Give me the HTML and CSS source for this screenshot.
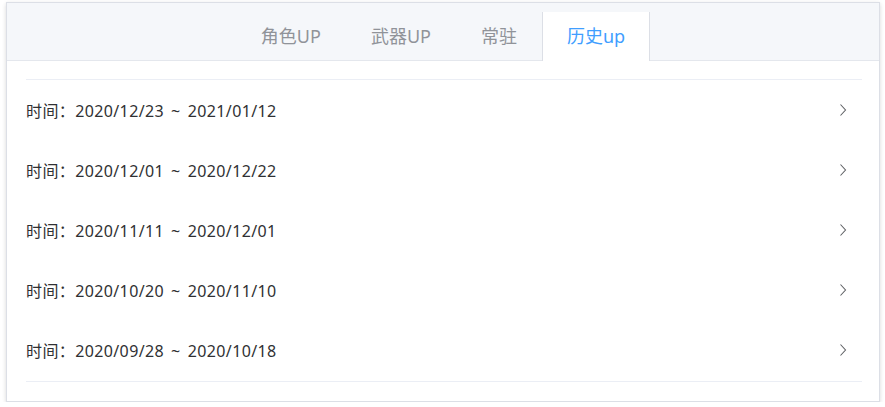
FILE: index.html
```html
<!DOCTYPE html>
<html lang="zh">
<head>
<meta charset="utf-8">
<link rel="stylesheet" href="styles.css">
</head>
<body>
<div class="card">
  <div class="tabs-header">
    <div class="tab">角色UP</div>
    <div class="tab">武器UP</div>
    <div class="tab">常驻</div>
    <div class="tab active">历史up</div>
  </div>
  <div class="content">
    <div class="list">
      <div class="row"><span class="label">时间：2020/12/23 ~ 2021/01/12</span><svg class="arrow" width="8" height="14" viewBox="0 0 8 14"><polyline points="1.5,1.5 6.5,7 1.5,12.5" fill="none" stroke="#606266" stroke-width="1.1"/></svg></div>
      <div class="row"><span class="label">时间：2020/12/01 ~ 2020/12/22</span><svg class="arrow" width="8" height="14" viewBox="0 0 8 14"><polyline points="1.5,1.5 6.5,7 1.5,12.5" fill="none" stroke="#606266" stroke-width="1.1"/></svg></div>
      <div class="row"><span class="label">时间：2020/11/11 ~ 2020/12/01</span><svg class="arrow" width="8" height="14" viewBox="0 0 8 14"><polyline points="1.5,1.5 6.5,7 1.5,12.5" fill="none" stroke="#606266" stroke-width="1.1"/></svg></div>
      <div class="row"><span class="label">时间：2020/10/20 ~ 2020/11/10</span><svg class="arrow" width="8" height="14" viewBox="0 0 8 14"><polyline points="1.5,1.5 6.5,7 1.5,12.5" fill="none" stroke="#606266" stroke-width="1.1"/></svg></div>
      <div class="row"><span class="label">时间：2020/09/28 ~ 2020/10/18</span><svg class="arrow" width="8" height="14" viewBox="0 0 8 14"><polyline points="1.5,1.5 6.5,7 1.5,12.5" fill="none" stroke="#606266" stroke-width="1.1"/></svg></div>
    </div>
  </div>
</div>
</body>
</html>
```
FILE: styles.css
```css
html, body {
  margin: 0;
  padding: 0;
  background: #fff;
}
body {
  padding: 2px 5px 0 6px;
  font-family: "Noto Sans", "Noto Sans CJK SC", sans-serif;
}
.card {
  height: 400px;
  box-sizing: border-box;
  border: 1px solid #dcdfe6;
  background: #fff;
  box-shadow: 0 2px 4px 0 rgba(0,0,0,.12), 0 0 6px 0 rgba(0,0,0,.04);
}
.tabs-header {
  display: flex;
  justify-content: center;
  background: #f5f7fa;
  border-bottom: 1px solid #e4e7ed;
  padding-top: 9px;
  height: 48px;
}
.tab {
  height: 48px;
  line-height: 49px;
  padding: 0 24px;
  border-left: 1px solid transparent;
  border-right: 1px solid transparent;
  font-size: 18px;
  color: #909399;
  margin-bottom: -1px;
}
.tab.active {
  background: #fff;
  color: #409eff;
  border-left-color: #dcdfe6;
  border-right-color: #dcdfe6;
  height: 49px;
}
.content {
  padding: 18px 17px 0 19px;
}
.list {
  border-top: 1px solid #ebeef5;
  border-bottom: 1px solid #ebeef5;
  padding-bottom: 1px;
}
.row {
  height: 60px;
  display: flex;
  align-items: center;
  justify-content: space-between;
  font-size: 16px;
  color: #303133;
}
.label {
  letter-spacing: 0.38px;
  word-spacing: 2.5px;
}
.arrow {
  margin-right: 15px;
}
```
